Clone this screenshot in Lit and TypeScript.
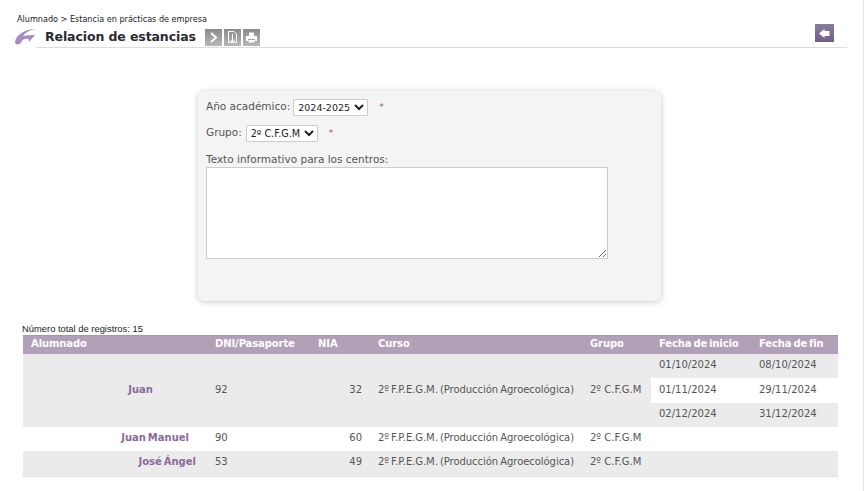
import { LitElement, html, css } from "lit";
import { customElement } from "lit/decorators.js";

const curso = "2º F.P.E.G.M. (Producción Agroecológica)";
const grupo = "2º C.F.G.M";

@customElement("app-root")
export class AppRoot extends LitElement {
  static styles = css`
    :host {
      display: block;
      width: 867px;
      height: 491px;
      overflow: hidden;
      background: #fff;
      font-family: "DejaVu Sans", Verdana, sans-serif;
      color: #555;
    }
    .page {
      box-sizing: border-box;
      height: 491px;
      width: 864px;
      border-right: 1px solid #e4e4e4;
      padding-top: 14px;
    }
    .crumb {
      margin-left: 17px;
      font-size: 8.1px;
      line-height: 10px;
      color: #222;
    }
    .titlebar {
      display: flex;
      align-items: center;
      margin-top: 3px;
      height: 20px;
    }
    .logo { margin-left: 14px; width: 22px; height: 18px; flex: none; }
    h1 {
      margin: 0 0 0 9px;
      font-size: 12.5px;
      letter-spacing: -0.1px;
      line-height: 20px;
      font-weight: bold;
      color: #2a2a33;
      white-space: nowrap;
    }
    .tools { display: flex; gap: 2px; margin-left: 9px; align-self: flex-start; margin-top: 2px; }
    .tool {
      width: 17px;
      height: 17px;
      background: linear-gradient(#8a8a8a, #b8b8b8);
      display: flex;
      align-items: center;
      justify-content: center;
    }
    .back {
      margin-left: auto;
      margin-right: 29px;
      margin-top: -8px;
      width: 19px;
      height: 18px;
      background: linear-gradient(#8a7a9e, #6f5f88);
      display: flex;
      align-items: center;
      justify-content: center;
    }
    .rule {
      margin: 0 16px 0 36px;
      height: 1px;
      background: #ddd;
    }
    .card {
      box-sizing: border-box;
      margin: 43px 0 0 198px;
      width: 463px;
      height: 210px;
      padding: 7px 8px;
      background: #f4f4f4;
      border-radius: 6px;
      box-shadow: 0 1px 6px rgba(0, 0, 0, 0.22);
      font-size: 10.5px;
      color: #555;
    }
    .field { display: flex; align-items: center; height: 18px; margin-bottom: 8px; white-space: nowrap; }
    .t { margin-bottom: 2px; }
    select {
      box-sizing: border-box;
      font-family: "DejaVu Sans", sans-serif;
      font-size: 10px;
      height: 17px;
      margin-left: 4px;
      padding: 0;
      background: #fff;
      color: #222;
      border: 1px solid #ccc;
      border-radius: 1px;
    }
    .s1 { width: 75px; margin-left: 3px; font-size: 9.5px; }
    .s2 { width: 72px; font-size: 9.6px; }
    .req { color: #a55; font-size: 9px; margin-left: 11px; }
    .lbl { line-height: 14px; margin-top: 10px; }
    textarea {
      display: block;
      box-sizing: border-box;
      width: 402px;
      height: 92px;
      margin: 1px 0 0;
      background: #fff;
      border: 1px solid #ccc;
    }
    .total {
      margin: 23px 0 0 22px;
      padding-bottom: 2px;
      font-family: "Liberation Sans", Arial, sans-serif;
      font-size: 9.4px;
      line-height: 9px;
      color: #222;
    }
    table {
      margin-left: 23px;
      width: 815px;
      border-collapse: collapse;
      table-layout: fixed;
      font-size: 10px;
      border-bottom: 1px solid #e2e2e2;
    }
    th {
      background: #b1a0b7;
      color: #fff;
      font-weight: bold;
      text-align: left;
      height: 15px;
      padding: 0 8px 3px;
      vertical-align: middle;
      border-top: 1px solid #a596ac;
      white-space: nowrap;
      letter-spacing: -0.1px;
      word-spacing: -1.5px;
    }
    td { padding: 0 8px 3px; height: 21.33px; vertical-align: middle; white-space: nowrap; }
    td.mid { padding-bottom: 1px; height: 23.33px; }
    tr.a > td { background: #ebebeb; }
    tr.b > td { background: #fff; }
    tr.white > td.date { background: #fff; }
    tr.grey > td.date { background: #ebebeb; }
    .name { text-align: right; font-weight: bold; color: #8a6a9c; word-spacing: -1.5px; }
    .num { text-align: right; }
    .curso { letter-spacing: -0.05px; word-spacing: -1px; }
  `;

  private person(name: string, pr: number, dni: string, nia: string, cls: string) {
    return html`<tr class=${cls}>
      <td class="name" style="padding-right:${pr}px">${name}</td>
      <td>${dni}</td><td class="num">${nia}</td><td class="curso">${curso}</td><td>${grupo}</td><td></td><td></td>
    </tr>`;
  }

  render() {
    return html`<div class="page">
      <div class="crumb">Alumnado &gt; Estancia en prácticas de empresa</div>
      <div class="titlebar">
        <svg class="logo" viewBox="0 0 22 18">
          <path d="M1 14 C2 8 8 2 21 1 C14 3 11 5 9 8 C13 7 17 7 21 7 L15 14 L14.5 11 C10 10 8 12 7 15 C5 17 1 17 1 14 Z" fill="#a98bc0"/>
        </svg>
        <h1>Relacion de estancias</h1>
        <div class="tools">
          <div class="tool"><svg width="11" height="11" viewBox="0 0 11 11"><path d="M3 1 L8 5.5 L3 10" fill="none" stroke="#fff" stroke-width="2"/></svg></div>
          <div class="tool"><svg width="13" height="15" viewBox="0 0 13 15"><path d="M2.5 1.5 H8 L10.5 4 V12.5 H2.5 Z" fill="none" stroke="#fff"/><path d="M6.5 4 V12 M4.5 10 L6.5 13 L8.5 10" fill="none" stroke="#fff"/></svg></div>
          <div class="tool"><svg width="13" height="13" viewBox="0 0 13 13"><path d="M4 1.5 H9 V5 H4 Z M1 5 H12 V10 H10 V8 H3 V10 H1 Z M3.5 9 H9.5 V11.5 H3.5 Z" fill="#fff"/></svg></div>
        </div>
        <div class="back"><svg width="13" height="11" viewBox="0 0 13 11"><path d="M1 5.5 L6.5 1 V3 H11.5 V8 H6.5 V10 Z" fill="#fff"/></svg></div>
      </div>
      <div class="rule"></div>
      <div class="card">
        <div class="field"><span class="t">Año académico:</span>
          <select class="s1"><option>2024-2025</option></select><span class="req">*</span></div>
        <div class="field"><span class="t">Grupo:</span>
          <select class="s2"><option>${grupo}</option></select><span class="req">*</span></div>
        <div class="lbl">Texto informativo para los centros:</div>
        <textarea></textarea>
      </div>
      <div class="total">Número total de registros: 15</div>
      <table>
        <colgroup><col style="width:184px"/><col style="width:103px"/><col style="width:60px"/><col style="width:212px"/><col style="width:69px"/><col style="width:100px"/><col style="width:87px"/></colgroup>
        <thead><tr><th>Alumnado</th><th>DNI/Pasaporte</th><th>NIA</th><th>Curso</th><th>Grupo</th><th>Fecha de inicio</th><th>Fecha de fin</th></tr></thead>
        <tbody>
          <tr class="a grey">
            <td class="name mid" rowspan="3" style="padding-right:54px">Juan</td>
            <td class="mid" rowspan="3">92</td><td class="num mid" rowspan="3">32</td><td class="curso mid" rowspan="3">${curso}</td><td class="mid" rowspan="3">${grupo}</td>
            <td class="date">01/10/2024</td><td class="date">08/10/2024</td>
          </tr>
          <tr class="white"><td class="date mid">01/11/2024</td><td class="date mid">29/11/2024</td></tr>
          <tr class="grey"><td class="date">02/12/2024</td><td class="date">31/12/2024</td></tr>
          ${this.person("Juan Manuel", 18, "90", "60", "b")}
          ${this.person("José Ángel", 11, "53", "49", "a")}
        </tbody>
      </table>
    </div>`;
  }
}
